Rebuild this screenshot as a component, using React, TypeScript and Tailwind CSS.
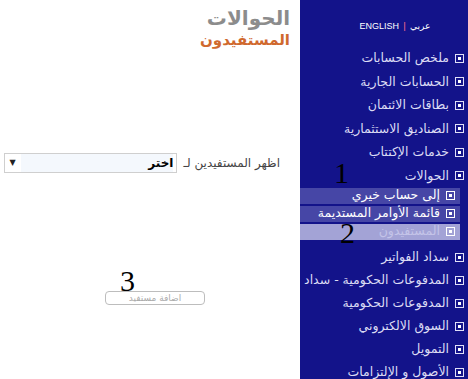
const Bullet = ({ light = false }: { light?: boolean }) => (
    <span
        className={`flex h-[9px] w-[9px] shrink-0 items-center justify-center border ${
            light ? "border-white" : "border-[#e0e0f8]"
        }`}
    >
        <span className="h-[3px] w-[3px] bg-white" />
    </span>
);

const topItems = [
    "ملخص الحسابات",
    "الحسابات الجارية",
    "بطاقات الائتمان",
    "الصناديق الاستثمارية",
    "خدمات الإكتتاب",
    "الحوالات",
];

const subItems = ["إلى حساب خيري", "قائمة الأوامر المستديمة", "المستفيدون"];

const bottomItems = [
    "سداد الفواتير",
    "المدفوعات الحكومية - سداد",
    "المدفوعات الحكومية",
    "السوق الالكتروني",
    "التمويل",
    "الأصول و الإلتزامات",
];

const MenuItem = ({ label, tight = false }: { label: string; tight?: boolean }) => (
    <li className={`flex items-center gap-[6px] pr-[4px] ${tight ? "h-[23px]" : "h-[23.5px]"}`}>
        <Bullet />
        <span className="whitespace-nowrap text-[12.5px] leading-none text-[#dcdcf4]">{label}</span>
    </li>
);

export default function App() {
    return (
        <div
            className="flex h-[379px] w-[468px] overflow-hidden bg-white"
            style={{ fontFamily: '"DejaVu Sans", sans-serif' }}
        >
            {/* content */}
            <main dir="rtl" className="relative flex w-[300px] flex-col">
                <div className="pr-[10px] pt-[5px]">
                    <h1 className="text-[20px] font-bold leading-[26px] text-[#8c8c8c]">الحوالات</h1>
                    <h2 className="text-[15px] font-bold leading-[18px] text-[#d0692e]">المستفيدون</h2>
                </div>

                {/* filter */}
                <div className="mt-[104px] flex items-center gap-[6px] pr-[20px]">
                    <span className="text-[12px] text-[#444]">اظهر المستفيدين لـ</span>
                    <div className="flex h-[20px] w-[173px] items-center justify-between border border-[#cfcfcf] bg-white pl-[4px] pr-[3px]">
                        <span className="bg-[#f4f8fd] pl-[127px] text-[12px] font-bold text-black">اختر</span>
                        <span className="text-[8px] text-[#222]">▼</span>
                    </div>
                </div>

                {/* add button */}
                <div className="mt-[118px] flex pr-[95px]">
                    <button className="h-[14px] w-[100px] rounded-[4px] border border-[#bdbdbd] bg-white text-[9px] leading-none text-[#aaa]">
                        اضافة مستفيد
                    </button>
                </div>

                <span className="absolute left-[120px] top-[266px] font-['Liberation_Serif'] text-[30px] leading-none text-black">
                    3
                </span>
            </main>

            {/* sidebar */}
            <nav dir="rtl" className="relative flex w-[168px] flex-col bg-[#13138a]">
                <div dir="ltr" className="mt-[20px] flex justify-center gap-[4px] pl-[22px] text-[9px] text-white">
                    <span className="font-['Liberation_Sans']">ENGLISH</span>
                    <span className="text-[#ff6b8a]">|</span>
                    <span>عربي</span>
                </div>

                <ul className="mt-[13px] flex flex-col">
                    {topItems.map((label) => (
                        <MenuItem key={label} label={label} />
                    ))}
                </ul>

                <ul className="flex flex-col gap-[2px]">
                    {subItems.map((label, i) => (
                        <li
                            key={label}
                            className={`mr-[8px] flex h-[16px] items-center gap-[6px] pr-[5px] ${
                                i === 2 ? "bg-[#a3a3d6]" : "bg-[#4646a6]"
                            }`}
                        >
                            <Bullet light />
                            <span
                                className={`whitespace-nowrap text-[12.5px] leading-none ${
                                    i === 2 ? "text-[#c4c4e8]" : "text-white"
                                }`}
                            >
                                {label}
                            </span>
                        </li>
                    ))}
                </ul>

                <ul className="mt-[6px] flex flex-col">
                    {bottomItems.map((label) => (
                        <MenuItem key={label} label={label} tight />
                    ))}
                </ul>

                <span className="absolute left-[34px] top-[158px] font-['Liberation_Serif'] text-[30px] leading-none text-black">
                    1
                </span>
                <span className="absolute left-[40px] top-[218px] font-['Liberation_Serif'] text-[30px] leading-none text-black">
                    2
                </span>
            </nav>
        </div>
    );
}
